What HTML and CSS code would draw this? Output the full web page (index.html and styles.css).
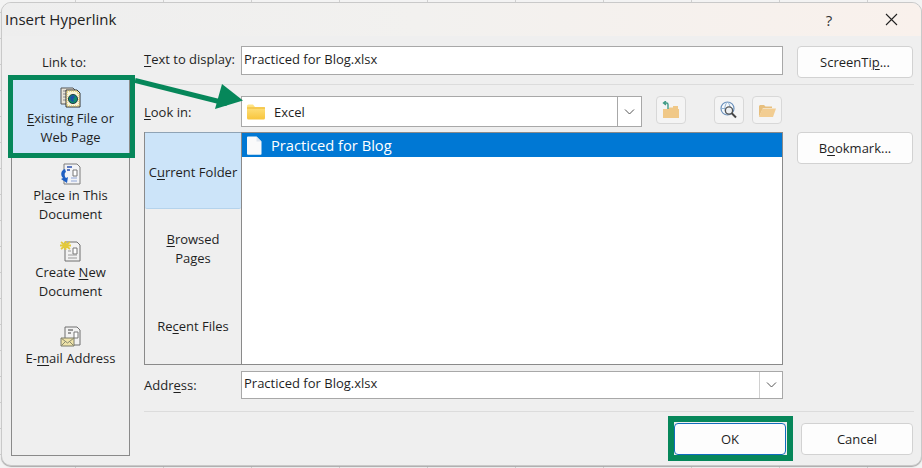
FILE: index.html
```html
<!DOCTYPE html>
<html lang="en">
<head>
<meta charset="utf-8">
<title>Insert Hyperlink</title>
<link rel="stylesheet" href="styles.css">
</head>
<body>
<div class="sheet">
  <div class="dialog">
    <header class="titlebar">
      <span class="title">Insert Hyperlink</span>
      <span class="help">?</span>
      <svg class="close" width="13" height="13" viewBox="0 0 13 13"><path d="M1 1l11 11M12 1L1 12" stroke="#222" stroke-width="1.1" fill="none"/></svg>
    </header>
    <div class="content">
      <aside class="side">
        <div class="side-label">Link to:</div>
        <nav class="rail">
          <div class="rail-item active">
            <svg class="ico" width="22" height="22" viewBox="0 0 22 22"><path d="M1 2h12l2 2v14H1z" fill="#e8e4d8" stroke="#555"/><path d="M3 5h8M3 8h8M3 11h8M3 14h8" stroke="#8a8a8a"/><path d="M6 4h11l3 3v14H6z" fill="#fbf6d8" stroke="#333"/><path d="M7 5h10v2h2v13H7z" fill="none" stroke="#d4b84a" stroke-dasharray="1 1"/><circle cx="13" cy="13" r="4.600" fill="#0f8a70" stroke="#123" stroke-width=".8"/><path d="M10 11l3-2 2 2-2 2 1 3-3-1z" fill="#1d4fa8"/></svg>
            <span><u>E</u>xisting File or<br>Web Page</span>
          </div>
          <div class="rail-item place">
            <svg class="ico" width="22" height="22" viewBox="0 0 22 22"><path d="M4 1h13l3 3v17H4z" fill="#f2f3f6" stroke="#7c7c7c"/><path d="M7 4h5M7 7h3" stroke="#5b78c0" stroke-width="2"/><path d="M13 7h4v6h-4z" fill="#fff" stroke="#777"/><path d="M11 15h6M11 18h6" stroke="#8fa6d8"/><path d="M5 6C1 7 0 12 3 15l-2 1 6 4 1-6-2 1C4 13 4 10 6 9z" fill="#1d5fc4"/></svg>
            <span>Pl<u>a</u>ce in This<br>Document</span>
          </div>
          <div class="rail-item create">
            <svg class="ico" width="22" height="22" viewBox="0 0 22 22"><path d="M5 2h12l3 3v16H5z" fill="#f2f2f2" stroke="#6f6f6f"/><path d="M13 8h4v6h-4z" fill="#fff" stroke="#777"/><path d="M8 15h9M8 18h9M8 11h3" stroke="#9a9a9a"/><path d="M1 2l9 7M10 2L1 9M5.500 1v9M0 5.500h11" stroke="#e3c93a" stroke-width="1.800"/></svg>
            <span>Create <u>N</u>ew<br>Document</span>
          </div>
          <div class="rail-item mail">
            <svg class="ico" width="22" height="22" viewBox="0 0 22 22"><path d="M5 1h12l3 3v15H5z" fill="#f2f2f2" stroke="#6f6f6f"/><path d="M8 4h5M8 7h3" stroke="#9a9a9a" stroke-width="2"/><path d="M14 6h4v6h-4z" fill="#fff" stroke="#777"/><path d="M1 12h13v8H1z" fill="#efe3a8" stroke="#7a7a6a"/><path d="M1 12l6.500 5 6.500-5M1 20l5-5M14 20l-5-5" fill="none" stroke="#8a8a70"/></svg>
            <span>E-<u>m</u>ail Address</span>
          </div>
        </nav>
      </aside>
      <main class="main">
        <div class="row-top">
          <div class="field-row first">
            <label class="lbl"><u>T</u>ext to display:</label>
            <div class="input">Practiced for Blog.xlsx</div>
            <button class="btn">ScreenTi<u>p</u>...</button>
          </div>
        </div>
        <div class="browse">
          <div class="browse-left">
            <div class="look-row">
              <label class="lbl"><u>L</u>ook in:</label>
              <div class="combo">
                <svg class="folder" width="20" height="18" viewBox="0 0 20 18"><defs><linearGradient id="fg" x1="0" y1="0" x2="0" y2="1"><stop offset="0" stop-color="#ffe68a"/><stop offset="1" stop-color="#f8c53c"/></linearGradient></defs><path d="M1 3a1.500 1.500 0 0 1 1.500-1.500H7L9 4h9a1 1 0 0 1 1 1v10a1.500 1.500 0 0 1-1.500 1.500h-15A1.500 1.500 0 0 1 1 15z" fill="url(#fg)"/><path d="M1 5h18" stroke="#eeb52c"/></svg>
                <span class="combo-text">Excel</span>
                <span class="combo-arrow"><svg width="11" height="6" viewBox="0 0 11 6"><path d="M1 .5l4.500 4.500L10 .5" stroke="#555" fill="none"/></svg></span>
              </div>
              <button class="tool up"><svg width="18" height="18" viewBox="0 0 18 18"><path d="M1 17V8h5l1.500-1.500H11V5h5v3h1v9z" fill="#f0c887"/><path d="M6 8V3.500A1.500 1.500 0 0 0 4.500 2H2M4 0L1.500 2 4 4" fill="none" stroke="#3f9a84" stroke-width="1.400"/></svg></button>
              <button class="tool web"><svg width="18" height="18" viewBox="0 0 18 18"><circle cx="7.500" cy="7.500" r="6.500" fill="#f6f9fc" stroke="#6e93bd" stroke-width="1.200"/><path d="M1 7.500h13M7.500 1C4 4 4 11 7.500 14M7.500 1C11 4 11 11 7.500 14" stroke="#8fb0d0" fill="none"/><circle cx="9" cy="9.500" r="3.600" fill="#eef1f3" stroke="#555" stroke-width="1.300"/><path d="M11.500 12l4.500 4.500" stroke="#444" stroke-width="2"/></svg></button>
              <button class="tool open"><svg width="18" height="16" viewBox="0 0 18 16"><path d="M1 15V4l1-1h4l1.500 1.500H14V6H5z" fill="#e7bf7e"/><path d="M1 15L4.500 6.500H18L15 15z" fill="#f2cd92"/></svg></button>
            </div>
            <div class="list-area">
              <div class="tabs">
                <div class="tab current">C<u>u</u>rrent Folder</div>
                <div class="tab browsed"><span><u>B</u>rowsed<br>Pages</span></div>
                <div class="tab recent">Re<u>c</u>ent Files</div>
              </div>
              <div class="list">
                <div class="list-sel">
                  <svg width="16" height="19" viewBox="0 0 16 19"><path d="M1 1.500A1 1 0 0 1 2 .5h8.500L15.500 5.500V18a.8.8 0 0 1-.8.8H2a1 1 0 0 1-1-1z" fill="#fafafa"/><path d="M10.500.5v5h5" fill="#dfe6ee"/></svg>
                  <span>Practiced for Blog</span>
                </div>
              </div>
            </div>
            <div class="addr-row">
              <label class="lbl">Addr<u>e</u>ss:</label>
              <div class="addr">
                <span class="addr-text">Practiced for Blog.xlsx</span>
                <span class="addr-arrow"><svg width="11" height="6" viewBox="0 0 11 6"><path d="M1 .5l4.500 4.500L10 .5" stroke="#555" fill="none"/></svg></span>
              </div>
            </div>
          </div>
          <div class="browse-right"><button class="btn">B<u>o</u>okmark...</button></div>
        </div>
        <footer class="footer">
          <button class="btn wide ok">OK</button>
          <button class="btn wide">Cancel</button>
        </footer>
      </main>
    </div>
  </div>
  <div class="mark mark-link"></div>
  <div class="mark mark-ok"></div>
  <svg class="arrow" width="120" height="50" viewBox="0 0 120 50"><path d="M0 3.500L92 26.500" stroke="#06875a" stroke-width="5" fill="none"/><path d="M108 23.500L87 7 80 32z" fill="#06875a"/></svg>
</div>
</body>
</html>
```

FILE: styles.css
```css
* { box-sizing: border-box; }
html, body { margin: 0; padding: 0; }
body { width: 922px; height: 468px; overflow: hidden; font-family: "Open Sans", "Noto Sans", sans-serif; font-size: 13px; color: #1f1f1f; }
u { text-underline-offset: 2px; text-decoration-thickness: 1px; }
button { font: inherit; color: inherit; }

.sheet {
  position: relative; width: 922px; height: 468px; background-color: #f3f3f3;
  background-image: linear-gradient(#d0d0d0 1px, transparent 1px), linear-gradient(90deg, #d0d0d0 1px, transparent 1px);
  background-size: 88px 26px; background-position: 75px 12px;
}
.dialog {
  position: absolute; left: 1px; top: 2px; width: 921px; height: 464px;
  background: #efefef; border: 1px solid #c9c9c9; border-radius: 10px; overflow: hidden;
  display: flex; flex-direction: column; box-shadow: 0 1px 1px #aaa;
}
.titlebar {
  height: 33px; flex: none; display: flex; align-items: center; padding-left: 3px;
  background: linear-gradient(90deg, #eeeeee 0%, #f2f1ef 45%, #f9f1ec 100%);
}
.title { font-size: 15px; flex: 1; color: #222; margin-top: -1px; }
.help { font-size: 15px; width: 20px; margin-right: 46px; text-align: center; color: #333; }
.close { margin-right: 23px; }

.content { flex: 1; display: flex; min-height: 0; }
.side { width: 142px; flex: none; padding-left: 9px; }
.side-label { height: 42px; padding: 17px 0 0 31px; line-height: 18px; }
.rail {
  width: 119px; height: 378px; border-left: 1px solid #8a8a8a; border-right: 1px solid #8a8a8a; border-bottom: 1px solid #8a8a8a;
  display: flex; flex-direction: column;
}
.rail-item { display: flex; flex-direction: column; align-items: center; text-align: center; line-height: 19px; }
.rail-item.active { height: 76px; background: #cce4f9; padding-top: 8px; }
.place { margin-top: 9px; }
.create { margin-top: 16px; }
.mail { margin-top: 25px; }
.rail-item span { display: block; margin-top: 1px; }
.ico { display: block; flex: none; }

.main { flex: 1; min-width: 0; display: flex; flex-direction: column; }
.row-top { height: 49px; flex: none; border-bottom: 1px solid #dcdcdc; margin-right: 7px; padding-top: 10px; }
.field-row { display: flex; align-items: flex-start; }
.lbl { flex: none; width: 97px; line-height: 18px; }
.first .lbl { padding-top: 4px; }
.input { width: 542px; height: 29px; background: #fff; border: 1px solid #a8a8a8; padding-left: 2px; line-height: 24px; flex: none; }
.btn { width: 116px; height: 32px; background: #fdfdfd; border: 1px solid #d2d2d2; border-radius: 4px; margin-left: 14px; padding: 0; flex: none; }

.browse { display: flex; flex: none; padding-top: 11px; }
.browse-left { width: 639px; flex: none; }
.browse-right { padding-top: 36px; }
.look-row { display: flex; align-items: flex-start; height: 36px; }
.look-row .lbl { padding-top: 7px; }
.combo { width: 401px; height: 31px; background: #fff; border: 1px solid #a8a8a8; display: flex; align-items: center; flex: none; padding-left: 4px; }
.combo-text { flex: 1; margin-left: 8px; }
.combo-arrow { width: 24px; height: 29px; border-left: 1px solid #a8a8a8; display: flex; align-items: center; justify-content: center; }
.tool { width: 30px; height: 28px; background: #f4f4f4; border: 1px solid #d8d8d8; border-radius: 4px; padding: 0; display: flex; align-items: center; justify-content: center; flex: none; }
.up { margin-left: 14px; }
.web { margin-left: 28px; }
.open { margin-left: 8px; }

.list-area { display: flex; height: 233px; }
.tabs { width: 98px; flex: none; background: #efefef; border: 1px solid #8a8a8a; border-top: 0; display: flex; flex-direction: column; text-align: center; }
.tab { line-height: 19px; display: flex; justify-content: center; }
.current { height: 77px; background: #cce4f9; border-top: 1px solid #8fa3b5; border-bottom: 1px solid #b5d3ec; border-radius: 0 0 2px 2px; align-items: center; padding-top: 3px; }
.browsed { padding-top: 21px; height: 108px; }
.list { flex: 1; background: #fff; border-top: 1px solid #8a8a8a; border-right: 1px solid #8a8a8a; border-bottom: 1px solid #8a8a8a; }
.list-sel { height: 24px; background: #0078d4; color: #fff; display: flex; align-items: center; gap: 9px; padding-left: 4px; font-size: 14.700px; }

.addr-row { display: flex; align-items: flex-start; margin-top: 6px; }
.addr-row .lbl { padding-top: 5px; }
.addr { width: 542px; height: 28px; background: #fff; border: 1px solid #a8a8a8; display: flex; align-items: center; flex: none; }
.addr-text { flex: 1; padding-left: 2px; padding-bottom: 4px; }
.addr-arrow { width: 23px; height: 26px; border-left: 1px solid #d0d0d0; display: flex; align-items: center; justify-content: center; }

.footer { margin: 12px 7px 0 0; border-top: 1px solid #dcdcdc; padding: 11px 1px 0 0; display: flex; justify-content: flex-end; }
.wide { width: 112px; margin-left: 15px; }
.wide.ok { border: 1px solid #0f6cbd; }

.mark { position: absolute; border-style: solid; border-color: #06875a; }
.mark-link { left: 8px; top: 75px; width: 127px; height: 83px; border-width: 5px; }
.mark-ok { left: 668px; top: 416px; width: 125px; height: 45px; border-width: 6px; }
.arrow { position: absolute; left: 135px; top: 77px; }
```
